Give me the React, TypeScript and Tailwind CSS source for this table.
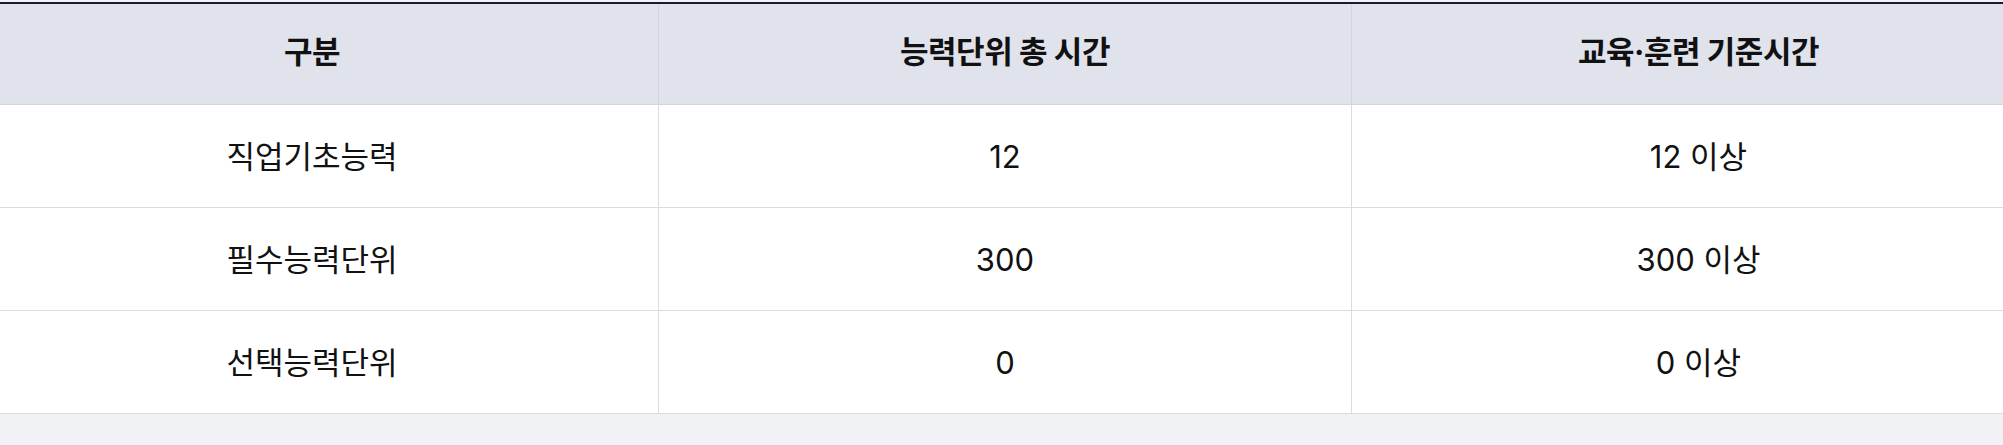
import React from "react";

const rows = [
  ["직업기초능력", "12", "12 이상"],
  ["필수능력단위", "300", "300 이상"],
  ["선택능력단위", "0", "0 이상"],
];

const headers = ["구분", "능력단위 총 시간", "교육·훈련 기준시간"];

export default function App() {
  return (
    <div
      className="w-[2003px] h-[445px] overflow-hidden bg-[#f0f2f5] pt-[2px]"
      style={{ fontFamily: 'Inter, "Noto Sans CJK KR", "Noto Sans", sans-serif' }}
    >
      <div className="ml-[-34px] w-[2079px] border-t-2 border-[#1c1c2c] text-[#111111]">
        <div className="grid grid-cols-3 bg-[#e0e2ec] border-b border-[#d3d5dc]">
          {headers.map((h, i) => (
            <div
              key={h}
              className={`h-[100px] flex items-center justify-center pb-[3px] text-[31px] font-bold tracking-[-0.5px] ${
                i < 2 ? "border-r border-[#d3d5dc]" : ""
              }`}
            >
              {h}
            </div>
          ))}
        </div>
        {rows.map((r) => (
          <div key={r[0]} className="grid grid-cols-3 bg-white border-b border-[#dcdce0]">
            {r.map((c, i) => (
              <div
                key={i}
                className={`h-[102px] flex items-center justify-center pt-[3px] text-[31px] font-normal ${
                  i < 2 ? "border-r border-[#dcdce0]" : ""
                }`}
              >
                {c}
              </div>
            ))}
          </div>
        ))}
      </div>
    </div>
  );
}
